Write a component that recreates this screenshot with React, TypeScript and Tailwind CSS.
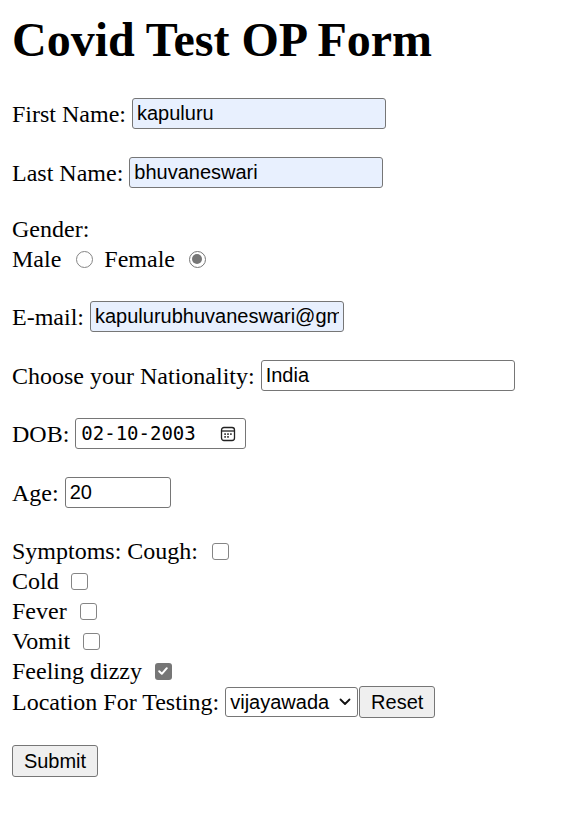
import type { ReactNode } from "react";

const SERIF = "font-['Liberation_Serif','Times_New_Roman',serif]";
const SANS = "font-['Liberation_Sans',Arial,sans-serif]";

function TextBox({ value, width, filled = false }: { value: string; width: string; filled?: boolean }) {
  return (
    <input
      type="text"
      defaultValue={value}
      className={`${width} h-[31px] px-[4px] border border-[#767676] rounded-[3px] text-[20px] text-black outline-none ${SANS} ${filled ? "bg-[#e8f0fe]" : "bg-white"}`}
    />
  );
}

function Radio({ checked = false }: { checked?: boolean }) {
  return (
    <span className={`w-[17px] h-[17px] rounded-full border-[1.5px] flex items-center justify-center ${checked ? "border-[#767676]" : "border-[#858585]"}`}>
      {checked && <span className="w-[10px] h-[10px] rounded-full bg-[#767676]" />}
    </span>
  );
}

function Check({ checked = false }: { checked?: boolean }) {
  if (checked)
    return (
      <span className="w-[17px] h-[17px] rounded-[3px] bg-[#767676] flex items-center justify-center">
        <svg width="12" height="12" viewBox="0 0 12 12" fill="none">
          <path d="M2.2 6.3 4.8 8.8 9.8 3.2" stroke="white" strokeWidth="2" strokeLinecap="round" strokeLinejoin="round" />
        </svg>
      </span>
    );
  return <span className="block w-[17px] h-[17px] rounded-[3px] border-[1.5px] border-[#858585] bg-white" />;
}

function Row({ children, className = "" }: { children: ReactNode; className?: string }) {
  return <div className={`flex items-center gap-[6px] h-[31px] ${className}`}>{children}</div>;
}

function SymRow({ label, checked = false, gap = "ml-[13px]", className = "" }: { label: string; checked?: boolean; gap?: string; className?: string }) {
  return (
    <div className={`flex items-center h-[30px] ${className}`}>
      <span>{label}</span>
      <span className={gap}>
        <Check checked={checked} />
      </span>
    </div>
  );
}

export default function App() {
  return (
    <div className={`min-h-[826px] bg-white text-black text-[24px] px-[12px] pt-[12px] ${SERIF}`}>
      <h1 className="m-0 text-[48px] font-bold leading-[56px] h-[56px]">Covid Test OP Form</h1>

      <Row className="mt-[30px]">
        <span>First Name:</span>
        <TextBox value="kapuluru" width="w-[254px]" filled />
      </Row>

      <Row className="mt-[28px]">
        <span>Last Name:</span>
        <TextBox value="bhuvaneswari" width="w-[254px]" filled />
      </Row>

      <div className="mt-[27px] h-[28px] leading-[28px]">Gender:</div>
      <div className="flex items-center h-[28px] mt-[2px]">
        <span>Male</span>
        <span className="ml-[15px]"><Radio /></span>
        <span className="ml-[11px]">Female</span>
        <span className="ml-[14px]"><Radio checked /></span>
      </div>

      <Row className="mt-[28px]">
        <span>E-mail:</span>
        <TextBox value="kapulurubhuvaneswari@gmail.com" width="w-[254px]" filled />
      </Row>

      <Row className="mt-[28px]">
        <span>Choose your Nationality:</span>
        <TextBox value="India" width="w-[254px]" />
      </Row>

      <Row className="mt-[27px]">
        <span>DOB:</span>
        <div className="w-[171px] h-[31px] border border-[#767676] rounded-[3px] flex items-center pl-[5px] pr-[9px] justify-between">
          <span className="font-['DejaVu_Sans_Mono','Liberation_Mono',monospace] text-[19px] leading-none">02-10-2003</span>
          <svg width="16" height="16" viewBox="0 0 16 16" fill="none">
            <rect x="1.5" y="1.5" width="13" height="13" rx="2.5" stroke="#222" strokeWidth="1.3" />
            <line x1="1.5" y1="5" x2="14.5" y2="5" stroke="#222" strokeWidth="1.3" />
            <rect x="4.3" y="7.3" width="1.6" height="1.6" fill="#222" />
            <rect x="7.2" y="7.3" width="1.6" height="1.6" fill="#222" />
            <rect x="10.1" y="7.3" width="1.6" height="1.6" fill="#222" />
            <rect x="4.3" y="10.1" width="1.6" height="1.6" fill="#222" />
            <rect x="7.2" y="10.1" width="1.6" height="1.6" fill="#222" />
          </svg>
        </div>
      </Row>

      <Row className="mt-[28px]">
        <span>Age:</span>
        <TextBox value="20" width="w-[106px]" />
      </Row>

      <SymRow label="Symptoms: Cough:" gap="ml-[14px]" className="mt-[28px]" />
      <SymRow label="Cold" gap="ml-[12px]" />
      <SymRow label="Fever" />
      <SymRow label="Vomit" />
      <SymRow label="Feeling dizzy" checked />

      <div className="flex items-center h-[32px]">
        <span>Location For Testing:</span>
        <div className={`ml-[6px] w-[133px] h-[30px] border border-[#767676] rounded-[3px] flex items-center justify-between pl-[4px] pr-[6px] text-[20px] ${SANS}`}>
          <span>vijayawada</span>
          <svg width="12" height="8" viewBox="0 0 12 8" fill="none">
            <path d="M1.5 1.5 6 6 10.5 1.5" stroke="#111" strokeWidth="1.8" strokeLinecap="round" strokeLinejoin="round" />
          </svg>
        </div>
        <button type="button" className={`ml-[1px] w-[76px] h-[32px] bg-[#efefef] border border-[#767676] rounded-[3px] text-[20px] ${SANS}`}>
          Reset
        </button>
      </div>

      <button type="button" className={`mt-[27px] w-[86px] h-[32px] bg-[#efefef] border border-[#767676] rounded-[3px] text-[20px] ${SANS}`}>
        Submit
      </button>
    </div>
  );
}
